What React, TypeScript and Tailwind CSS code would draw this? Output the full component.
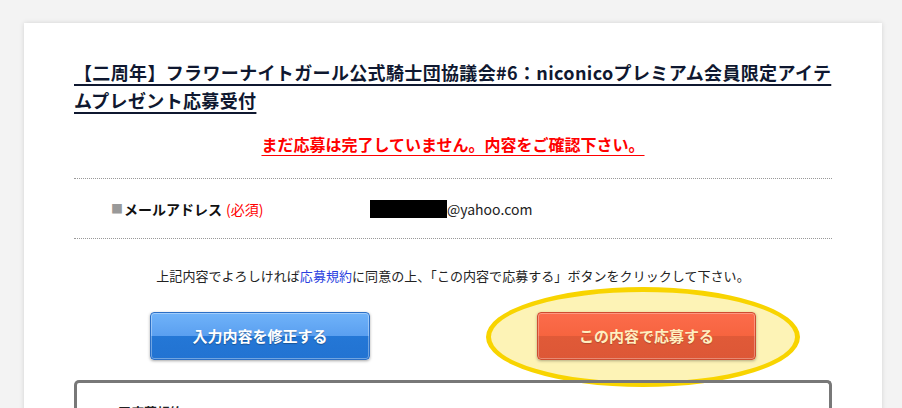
import React from "react";

export default function App() {
  return (
    <div
      className="min-h-[408px] w-[902px] bg-[#f3f3f3] pt-[23px] pl-[24px]"
      style={{ fontFamily: '"Noto Sans CJK JP", "Noto Sans", sans-serif' }}
    >
      <div className="w-[858px] bg-white shadow-[0_0_5px_rgba(0,0,0,0.13)] px-[50px] pt-[35px] pb-[40px]">
        <h1 className="text-[18px] leading-[28px] font-bold text-[#0f1830] underline underline-offset-[4px] decoration-[1.5px] tracking-[0.35px]">
          【二周年】フラワーナイトガール公式騎士団協議会#6：niconicoプレミアム会員限定アイテムプレゼント応募受付
        </h1>

        <p className="mt-[18px] text-center text-[16px] leading-[24px] font-bold text-[#ff0000] underline underline-offset-[4px]">
          まだ応募は完了していません。内容をご確認下さい。
        </p>

        <div className="mt-[22px] border-t border-b border-dotted border-[#999] h-[61px] flex items-center">
          <div className="w-[296px] pl-[37px] text-[14px] leading-[20px] flex items-center">
            <span className="text-[#999] text-[12px] mr-[1px]">■</span>
            <span className="font-bold text-[#111]">メールアドレス</span>
            <span className="text-[#ff0000] ml-[4px]">(必須)</span>
          </div>
          <div className="flex items-center text-[14px] leading-[20px] text-[#222]">
            <span className="inline-block w-[77px] h-[18px] bg-black" />
            <span>@yahoo.com</span>
          </div>
        </div>

        <p className="mt-[27px] text-center text-[13px] leading-[20px] text-[#222] tracking-[0.05px]">
          上記内容でよろしければ<span className="text-[#2a3fe0]">応募規約</span>に同意の上、「この内容で応募する」ボタンをクリックして下さい。
        </p>

        <div className="relative mt-[26px] flex justify-center gap-[167px]">
          <div className="absolute left-[412px] top-[-25px] w-[314px] h-[100px] rounded-[50%] border-[5px] border-[#f8d400] bg-[#fdf3b6]" />
          <button className="relative w-[220px] h-[48px] rounded-[4px] border border-[#2b6fc6] bg-[linear-gradient(to_bottom,#70b3f9_0%,#5a9ff0_50%,#2477d6_50%,#2273d2_100%)] shadow-[inset_0_0_0_1px_rgba(255,255,255,0.35),0_1px_3px_rgba(0,0,0,0.35)] text-white text-[15px] font-bold [text-shadow:0_1px_1px_rgba(0,0,0,0.3)]">
            入力内容を修正する
          </button>
          <button className="relative w-[219px] h-[48px] rounded-[4px] border border-[#cf4c30] bg-[linear-gradient(to_bottom,#fc6c4c_0%,#f6643f_50%,#e05a38_50%,#dd5736_100%)] shadow-[inset_0_0_0_1px_rgba(255,255,255,0.3),0_1px_3px_rgba(0,0,0,0.3)] text-[#ffeec0] text-[15px] font-bold [text-shadow:0_1px_1px_rgba(0,0,0,0.2)]">
            この内容で応募する
          </button>
        </div>

        <div className="relative mt-[20px] border-[3px] border-b-0 border-[#787878] rounded-t-[5px] h-[120px] pl-[41px] pt-[19px]">
          <p className="text-[13px] leading-[20px] font-bold text-[#222]">■応募規約</p>
        </div>
      </div>
    </div>
  );
}
